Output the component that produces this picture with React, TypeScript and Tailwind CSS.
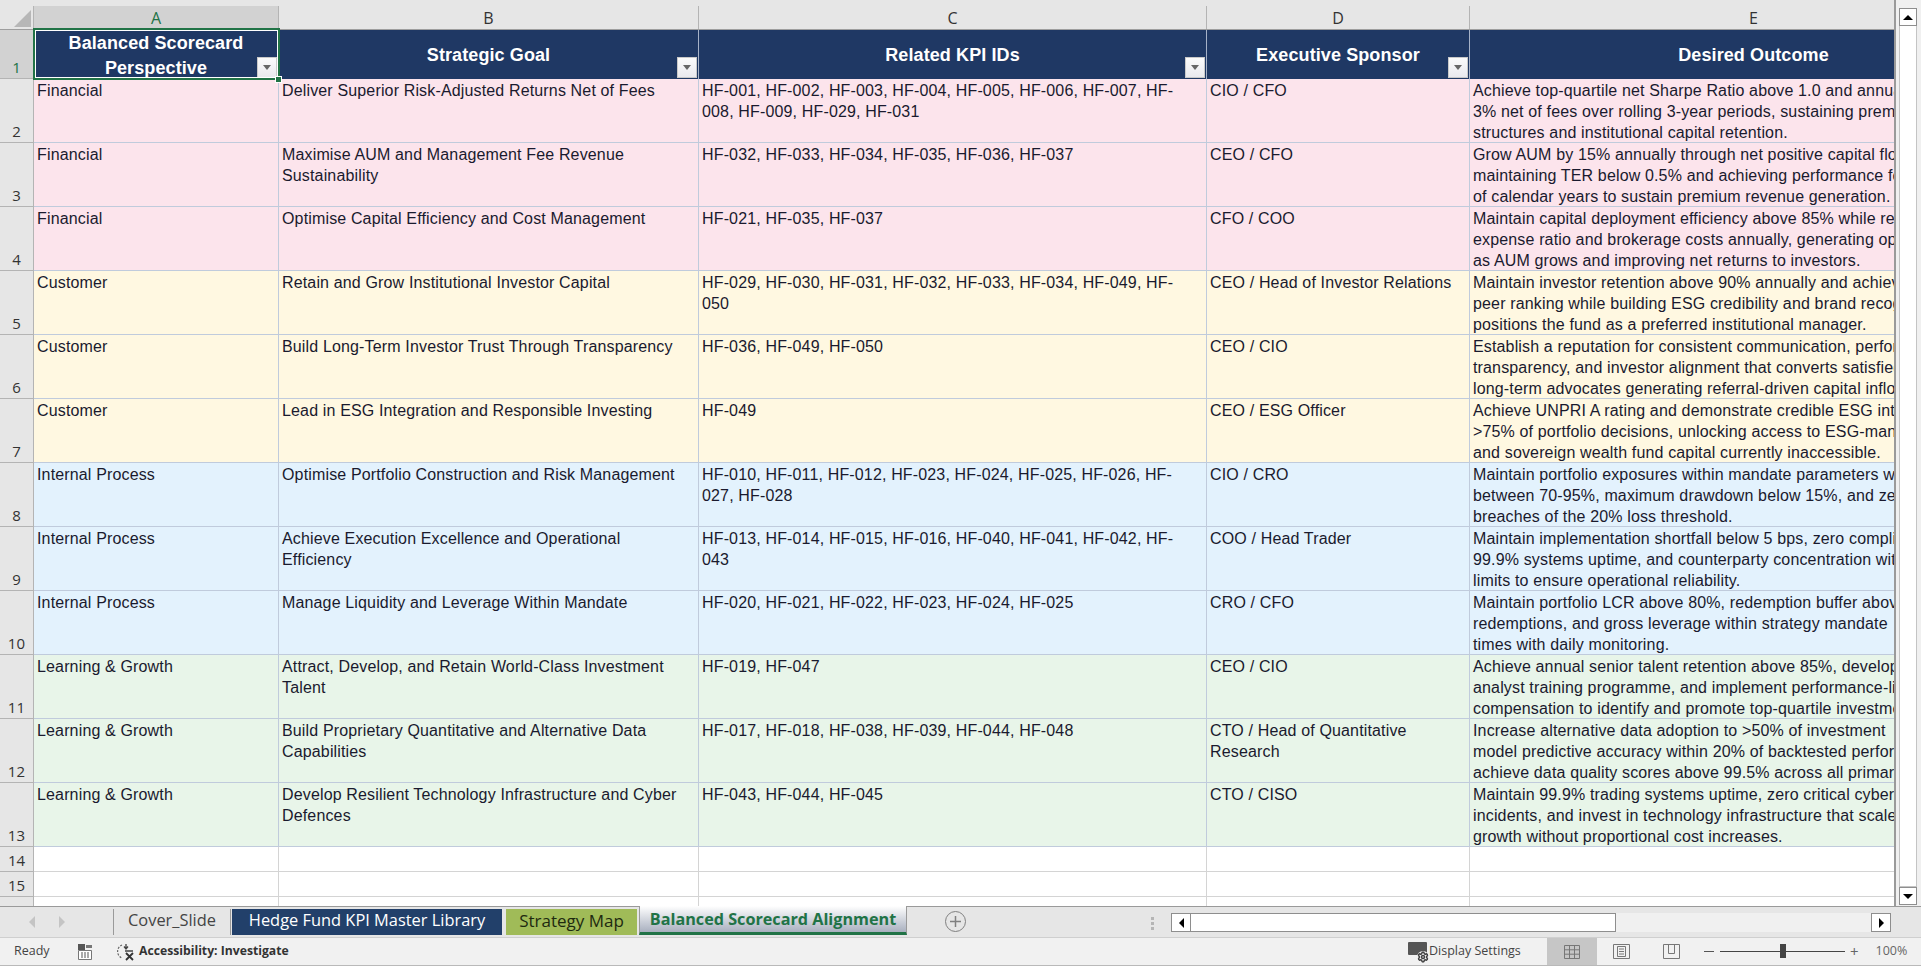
import { Settings } from "lucide-react";

type Row = { n: number; bg: string; a: string; b: string[]; c: string[]; d: string[]; e: string[] };

const PINK = "bg-[#fce4ec]";
const YELLOW = "bg-[#fff8e1]";
const BLUE = "bg-[#e3f2fd]";
const GREEN = "bg-[#e8f5e9]";

const rows: Row[] = [
  { n: 2, bg: PINK, a: "Financial", b: ["Deliver Superior Risk-Adjusted Returns Net of Fees"], c: ["HF-001, HF-002, HF-003, HF-004, HF-005, HF-006, HF-007, HF-", "008, HF-009, HF-029, HF-031"], d: ["CIO / CFO"], e: ["Achieve top-quartile net Sharpe Ratio above 1.0 and annual", "3% net of fees over rolling 3-year periods, sustaining premium", "structures and institutional capital retention."] },
  { n: 3, bg: PINK, a: "Financial", b: ["Maximise AUM and Management Fee Revenue", "Sustainability"], c: ["HF-032, HF-033, HF-034, HF-035, HF-036, HF-037"], d: ["CEO / CFO"], e: ["Grow AUM by 15% annually through net positive capital flows", "maintaining TER below 0.5% and achieving performance fees", "of calendar years to sustain premium revenue generation."] },
  { n: 4, bg: PINK, a: "Financial", b: ["Optimise Capital Efficiency and Cost Management"], c: ["HF-021, HF-035, HF-037"], d: ["CFO / COO"], e: ["Maintain capital deployment efficiency above 85% while reducing", "expense ratio and brokerage costs annually, generating operating", "as AUM grows and improving net returns to investors."] },
  { n: 5, bg: YELLOW, a: "Customer", b: ["Retain and Grow Institutional Investor Capital"], c: ["HF-029, HF-030, HF-031, HF-032, HF-033, HF-034, HF-049, HF-", "050"], d: ["CEO / Head of Investor Relations"], e: ["Maintain investor retention above 90% annually and achieve", "peer ranking while building ESG credibility and brand recognition", "positions the fund as a preferred institutional manager."] },
  { n: 6, bg: YELLOW, a: "Customer", b: ["Build Long-Term Investor Trust Through Transparency"], c: ["HF-036, HF-049, HF-050"], d: ["CEO / CIO"], e: ["Establish a reputation for consistent communication, performance", "transparency, and investor alignment that converts satisfied", "long-term advocates generating referral-driven capital inflows."] },
  { n: 7, bg: YELLOW, a: "Customer", b: ["Lead in ESG Integration and Responsible Investing"], c: ["HF-049"], d: ["CEO / ESG Officer"], e: ["Achieve UNPRI A rating and demonstrate credible ESG integration", ">75% of portfolio decisions, unlocking access to ESG-mandated", "and sovereign wealth fund capital currently inaccessible."] },
  { n: 8, bg: BLUE, a: "Internal Process", b: ["Optimise Portfolio Construction and Risk Management"], c: ["HF-010, HF-011, HF-012, HF-023, HF-024, HF-025, HF-026, HF-", "027, HF-028"], d: ["CIO / CRO"], e: ["Maintain portfolio exposures within mandate parameters with", "between 70-95%, maximum drawdown below 15%, and zero", "breaches of the 20% loss threshold."] },
  { n: 9, bg: BLUE, a: "Internal Process", b: ["Achieve Execution Excellence and Operational", "Efficiency"], c: ["HF-013, HF-014, HF-015, HF-016, HF-040, HF-041, HF-042, HF-", "043"], d: ["COO / Head Trader"], e: ["Maintain implementation shortfall below 5 bps, zero compliance", "99.9% systems uptime, and counterparty concentration within", "limits to ensure operational reliability."] },
  { n: 10, bg: BLUE, a: "Internal Process", b: ["Manage Liquidity and Leverage Within Mandate"], c: ["HF-020, HF-021, HF-022, HF-023, HF-024, HF-025"], d: ["CRO / CFO"], e: ["Maintain portfolio LCR above 80%, redemption buffer above", "redemptions, and gross leverage within strategy mandate", "times with daily monitoring."] },
  { n: 11, bg: GREEN, a: "Learning & Growth", b: ["Attract, Develop, and Retain World-Class Investment", "Talent"], c: ["HF-019, HF-047"], d: ["CEO / CIO"], e: ["Achieve annual senior talent retention above 85%, develop", "analyst training programme, and implement performance-linked", "compensation to identify and promote top-quartile investment"] },
  { n: 12, bg: GREEN, a: "Learning & Growth", b: ["Build Proprietary Quantitative and Alternative Data", "Capabilities"], c: ["HF-017, HF-018, HF-038, HF-039, HF-044, HF-048"], d: ["CTO / Head of Quantitative", "Research"], e: ["Increase alternative data adoption to >50% of investment", "model predictive accuracy within 20% of backtested performance", "achieve data quality scores above 99.5% across all primary"] },
  { n: 13, bg: GREEN, a: "Learning & Growth", b: ["Develop Resilient Technology Infrastructure and Cyber", "Defences"], c: ["HF-043, HF-044, HF-045"], d: ["CTO / CISO"], e: ["Maintain 99.9% trading systems uptime, zero critical cyber", "incidents, and invest in technology infrastructure that scales", "growth without proportional cost increases."] },
];

function Lines({ lines }: { lines: string[] }) {
  return (
    <>
      {lines.map((l, i) => (
        <div key={i} className="whitespace-nowrap">{l}</div>
      ))}
    </>
  );
}

function Filter() {
  return (
    <div className="absolute right-[1px] bottom-[1px] w-[20px] h-[21px] bg-gradient-to-b from-[#fbfbfb] to-[#e9e9ee] border border-[#c9c9c9] flex items-center justify-center">
      <div className="w-0 h-0 border-l-[4px] border-r-[4px] border-t-[5px] border-l-transparent border-r-transparent border-t-[#666]" />
    </div>
  );
}

function Head({ w, title, filter }: { w: string; title: string; filter?: boolean }) {
  return (
    <div className={`${w} shrink-0 relative h-full pt-[2px] bg-[#1f3864] border-r border-[#a6b2c8] flex items-center justify-center text-center text-white font-bold text-[18px] tracking-[0.1px] leading-[25px]`}>
      {title}
      {filter && <Filter />}
    </div>
  );
}

function RowNum({ n, active, className }: { n: number; active?: boolean; className?: string }) {
  return (
    <div className={`w-[34px] shrink-0 h-full flex items-end justify-center border-r border-b border-[#b4b4b4] font-['Open_Sans',sans-serif] text-[15px] leading-[21px] ${active ? "bg-[#d2d2d2] text-[#217346]" : "bg-[#e6e6e6] text-[#333]"} ${className ?? ""}`}>
      {n}
    </div>
  );
}

function Cell({ w, lines }: { w: string; lines: string[] }) {
  return (
    <div className={`${w} shrink-0 h-full overflow-hidden border-r border-b border-[#c0cbdc] pl-[3px] pt-[1px]`}>
      <Lines lines={lines} />
    </div>
  );
}

function Blank({ n, h }: { n: number; h: string }) {
  const cell = "h-full shrink-0 border-r border-b border-[#d4d4d4]";
  return (
    <div className={`flex ${h} bg-white`}>
      <RowNum n={n} />
      <div className={`w-[245px] ${cell}`} />
      <div className={`w-[420px] ${cell}`} />
      <div className={`w-[508px] ${cell}`} />
      <div className={`w-[263px] ${cell}`} />
      <div className={`w-[568px] ${cell}`} />
    </div>
  );
}

function ColLabel({ w, label, active }: { w: string; label: string; active?: boolean }) {
  return (
    <div className={`${w} shrink-0 h-full flex items-center justify-center border-r border-[#b4b4b4] text-[16px] ${active ? "bg-[#d2d2d2] text-[#217346]" : "text-[#333]"}`}>
      {label}
    </div>
  );
}

function SheetGrid() {
  return (
    <div className="w-[1894px] shrink-0 h-full overflow-hidden font-['Liberation_Sans',Arial,sans-serif]">
      <div className="h-[6px] bg-[#e6e6e6]" />
      <div className="flex h-[24px] bg-[#e6e6e6] border-b border-[#9e9e9e] font-['Open_Sans',sans-serif]">
        <div className="w-[34px] shrink-0 h-full border-r border-[#b4b4b4] relative">
          <svg className="absolute left-[14px] top-[4px]" width="17" height="17" viewBox="0 0 17 17">
            <path d="M17 0V17H0Z" fill="#b7b7b7" />
          </svg>
        </div>
        <ColLabel w="w-[245px]" label="A" active />
        <ColLabel w="w-[420px]" label="B" />
        <ColLabel w="w-[508px]" label="C" />
        <ColLabel w="w-[263px]" label="D" />
        <ColLabel w="w-[568px]" label="E" />
      </div>
      <div className="flex h-[49px] relative">
        <RowNum n={1} active />
        <Head w="w-[245px]" title="Balanced Scorecard Perspective" filter />
        <Head w="w-[420px]" title="Strategic Goal" filter />
        <Head w="w-[508px]" title="Related KPI IDs" filter />
        <Head w="w-[263px]" title="Executive Sponsor" filter />
        <Head w="w-[568px]" title="Desired Outcome" />
        <div className="absolute left-[33px] top-[-2px] w-[247px] h-[52px] border-2 border-[#217346] outline outline-1 -outline-offset-3 outline-white" />
        <div className="absolute left-[275px] top-[46px] w-[7px] h-[7px] bg-[#217346] border border-white" />
      </div>
      {rows.map((r) => (
        <div key={r.n} className={`flex h-[64px] ${r.bg} text-[16px] tracking-[0.15px] leading-[21px] text-[#1a1a2e]`}>
          <RowNum n={r.n} />
          <Cell w="w-[245px]" lines={[r.a]} />
          <Cell w="w-[420px]" lines={r.b} />
          <Cell w="w-[508px]" lines={r.c} />
          <Cell w="w-[263px]" lines={r.d} />
          <Cell w="w-[568px]" lines={r.e} />
        </div>
      ))}
      <Blank n={14} h="h-[25px]" />
      <Blank n={15} h="h-[25px]" />
      <Blank n={16} h="h-[25px]" />
    </div>
  );
}

function VScroll() {
  return (
    <div className="flex-1 h-full bg-[#f0f0f0] border-l-2 border-[#9a9a9a] pl-[3px] pt-[8px] pb-[1px] flex flex-col">
      <div className="w-[18px] h-[18px] bg-white border border-[#8e8e8e] flex items-center justify-center">
        <div className="w-0 h-0 border-l-[5px] border-r-[5px] border-b-[5px] border-l-transparent border-r-transparent border-b-black" />
      </div>
      <div className="w-[18px] flex-1 bg-white border-x border-b border-[#c4c4c4]" />
      <div className="w-[18px] h-[18px] bg-white border border-[#8e8e8e] flex items-center justify-center">
        <div className="w-0 h-0 border-l-[5px] border-r-[5px] border-t-[5px] border-l-transparent border-r-transparent border-t-black" />
      </div>
    </div>
  );
}

function TabBar() {
  return (
    <div className="h-[32px] bg-[#e6e6e6] border-y border-t-[#9a9a9a] border-b-[#cfcfcf] flex font-['Open_Sans',sans-serif] text-[16.4px] relative">
      <div className="w-[113px] shrink-0 flex items-center gap-[24px] pl-[29px]">
        <div className="w-0 h-0 border-y-[6px] border-r-[6px] border-y-transparent border-r-[#c4c4c4]" />
        <div className="w-0 h-0 border-y-[6px] border-l-[6px] border-y-transparent border-l-[#c4c4c4]" />
      </div>
      <div className="w-[118px] shrink-0 my-[2px] pb-[3px] border-x border-[#9a9a9a] flex items-center justify-center text-[#444]">Cover_Slide</div>
      <div className="w-[270px] ml-[1px] shrink-0 my-[2px] pb-[3px] bg-[#22406a] text-white flex items-center justify-center">Hedge Fund KPI Master Library</div>
      <div className="w-[131px] ml-[4px] shrink-0 my-[2px] pb-[3px] bg-[#a0bb58] text-[#1e2a10] text-[17px] flex items-center justify-center">Strategy Map</div>
      <div className="w-[268px] ml-[2px] shrink-0 -mt-[1px] h-[29px] bg-gradient-to-b from-white to-[#a9b0bf] border-x border-[#9a9a9a] border-b-[3px] border-b-[#217346] text-[#217346] font-bold text-[16.2px] flex items-center justify-center">Balanced Scorecard Alignment</div>
      <div className="ml-[38px] mt-[4px] shrink-0 w-[21px] h-[21px] rounded-full border border-[#808080] flex items-center justify-center">
        <svg width="11" height="11" viewBox="0 0 11 11"><path d="M5.5 0V11M0 5.5H11" stroke="#808080" strokeWidth="1.5" /></svg>
      </div>
      <div className="ml-[185px] mt-[10px] shrink-0 flex flex-col gap-[2px]">
        <div className="w-[3px] h-[3px] bg-[#b5b5b5]" />
        <div className="w-[3px] h-[3px] bg-[#b5b5b5]" />
        <div className="w-[3px] h-[3px] bg-[#b5b5b5]" />
      </div>
      <div className="ml-[17px] mt-[6px] w-[720px] shrink-0 h-[19px] flex bg-[#f0f0f0]">
        <div className="w-[20px] h-full bg-white border border-[#8e8e8e] flex items-center justify-center">
          <div className="w-0 h-0 border-y-[5px] border-r-[5px] border-y-transparent border-r-black" />
        </div>
        <div className="w-[425px] h-full bg-white border-y border-r border-[#8e8e8e]" />
        <div className="flex-1" />
        <div className="w-[20px] h-full bg-white border border-[#8e8e8e] flex items-center justify-center">
          <div className="w-0 h-0 border-y-[5px] border-l-[5px] border-y-transparent border-l-black" />
        </div>
      </div>
    </div>
  );
}

function StatusBar() {
  return (
    <div className="h-[28px] bg-[#f1f1f1] border-b border-[#b9b9b9] flex items-center font-['Open_Sans',sans-serif] text-[12.5px] text-[#444]">
      <span className="ml-[14px] w-[63px] shrink-0">Ready</span>
      <svg className="shrink-0" width="16" height="16" viewBox="0 0 16 16">
        <rect x="1" y="0" width="7" height="6" fill="#555" />
        <rect x="9" y="1" width="6" height="3" fill="#777" />
        <path d="M1.5 6.5H14.5V15.5H1.5Z" fill="#fff" stroke="#777" />
        <path d="M4 9H6M7 9H9M10 9H12M4 11H6M7 11H9M10 11H12M4 13H6M7 13H9M10 13H12" stroke="#555" />
      </svg>
      <svg className="ml-[23px] shrink-0" width="20" height="18" viewBox="0 0 20 18" fill="none">
        <path d="M6 2A7 7 0 0 0 6 15" stroke="#666" strokeWidth="1.2" strokeDasharray="2 1.4" />
        <path d="M10 1V6M8 3.5L10 6L12 3.5M9 8H17" stroke="#444" strokeWidth="1.3" />
        <path d="M10 10L17 17M17 10L10 17" stroke="#333" strokeWidth="1.8" />
      </svg>
      <span className="ml-[3px] font-bold text-[12.2px] text-[#333] whitespace-nowrap w-[154px] shrink-0">Accessibility: Investigate</span>
      <div className="ml-[1115px] shrink-0 w-[20px] h-[20px] relative">
        <div className="absolute left-0 top-0 w-[19px] h-[13px] bg-[#555] rounded-[1px]" />
        <Settings className="absolute right-[-1px] bottom-[-1px] bg-[#f1f1f1] rounded-full text-[#444]" size={12} strokeWidth={3} />
      </div>
      <span className="ml-[1px] whitespace-nowrap w-[118px] shrink-0">Display Settings</span>
      <div className="w-[50px] h-full shrink-0 bg-[#c6c6c6] flex items-center justify-center">
        <svg width="16" height="14" viewBox="0 0 16 14" fill="none" stroke="#777"><path d="M.5.5H15.5V13.5H.5ZM5.5.5V13.5M10.5.5V13.5M.5 4.8H15.5M.5 9.2H15.5" /></svg>
      </div>
      <svg className="ml-[16px] shrink-0" width="17" height="15" viewBox="0 0 17 15" fill="none" stroke="#777"><path d="M.5.5H16.5V14.5H.5Z" /><path d="M4.5 2.5H12.5V12.5H4.5ZM6 5H11M6 7.5H11M6 10H11" /></svg>
      <svg className="ml-[33px] shrink-0" width="17" height="15" viewBox="0 0 17 15" fill="none" stroke="#777"><path d="M.5.5H16.5V14.5H.5ZM5.5.5V9.5H11.5V.5" /></svg>
      <div className="ml-[24px] w-[10px] h-[1px] bg-[#555] shrink-0" />
      <div className="ml-[6px] w-[125px] h-[1px] bg-[#444] shrink-0 relative">
        <div className="absolute left-[60px] -top-[7px] w-[6px] h-[14px] bg-[#444]" />
      </div>
      <div className="ml-[5px] shrink-0 text-[15px] leading-none text-[#666]">+</div>
      <span className="ml-[17px] shrink-0 text-[#666]">100%</span>
    </div>
  );
}

export default function App() {
  return (
    <div className="w-[1921px] h-[966px] overflow-hidden flex flex-col bg-[#e6e6e6]">
      <div className="h-[906px] flex shrink-0">
        <SheetGrid />
        <VScroll />
      </div>
      <TabBar />
      <StatusBar />
    </div>
  );
}
